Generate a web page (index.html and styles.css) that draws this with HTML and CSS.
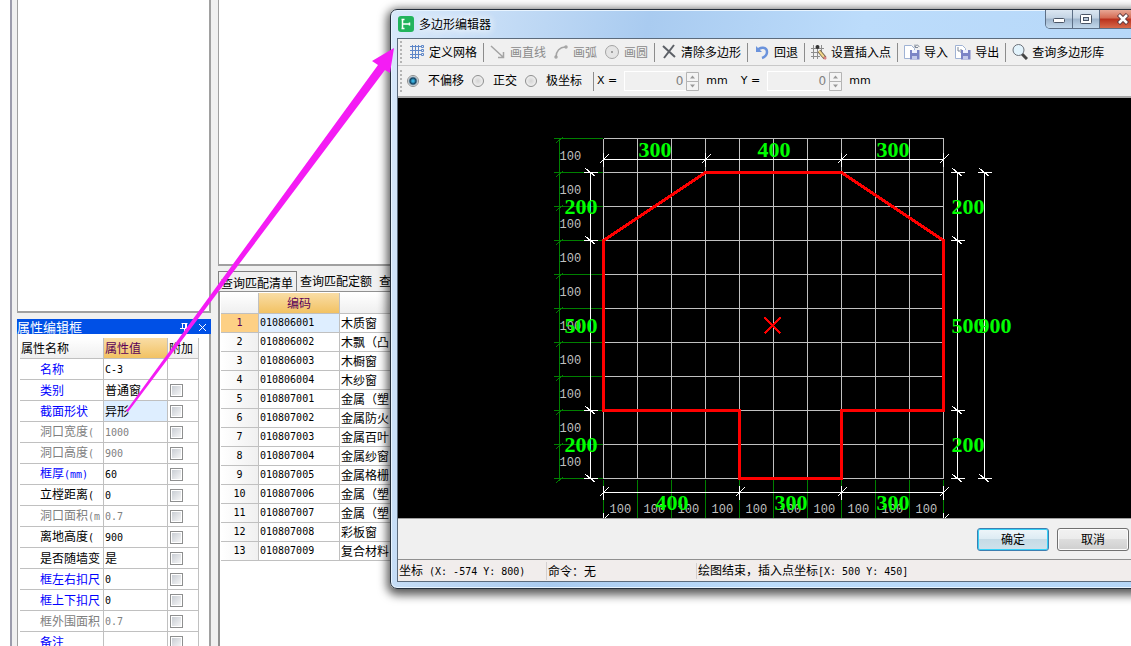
FILE: index.html
```html
<!DOCTYPE html>
<html lang="zh-CN">
<head>
<meta charset="utf-8">
<title>多边形编辑器</title>
<link rel="stylesheet" href="styles.css">
</head>
<body>
<div class="app">
  <aside class="dock">
    <div class="tree"></div>
    <div class="dock-title"><span>属性编辑框</span>
      <svg width="30" height="14" viewBox="0 0 30 14" fill="none" stroke="#fff"><path d="M2.500 3.500h6M3.500 3v5M6.500 3v5M7.500 3v5M1 8.500h8M5.500 9v3M20 4l7 7M27 4l-7 7"/></svg>
    </div>
    <div class="props">
      <table class="prop-table">
        <colgroup><col class="c-name"><col class="c-value"><col class="c-extra"></colgroup>
        <thead><tr><th>属性名称</th><th class="hot">属性值</th><th>附加</th></tr></thead>
        <tbody>
          <tr class="key"><td>名称</td><td><span class="mono">C-3</span></td><td></td></tr>
          <tr class="key"><td>类别</td><td>普通窗</td><td><input type="checkbox" aria-label="类别"></td></tr>
          <tr class="key"><td>截面形状</td><td class="sel">异形</td><td><input type="checkbox" aria-label="截面形状"></td></tr>
          <tr class="off"><td>洞口宽度<span class="mono">(</span></td><td><span class="mono">1000</span></td><td><input type="checkbox" aria-label="洞口宽度"></td></tr>
          <tr class="off"><td>洞口高度<span class="mono">(</span></td><td><span class="mono">900</span></td><td><input type="checkbox" aria-label="洞口高度"></td></tr>
          <tr class="key"><td>框厚<span class="mono">(mm)</span></td><td><span class="mono">60</span></td><td><input type="checkbox" aria-label="框厚"></td></tr>
          <tr><td>立樘距离<span class="mono">(</span></td><td><span class="mono">0</span></td><td><input type="checkbox" aria-label="立樘距离"></td></tr>
          <tr class="off"><td>洞口面积<span class="mono">(m</span></td><td><span class="mono">0.7</span></td><td><input type="checkbox" aria-label="洞口面积"></td></tr>
          <tr><td>离地高度<span class="mono">(</span></td><td><span class="mono">900</span></td><td><input type="checkbox" aria-label="离地高度"></td></tr>
          <tr><td>是否随墙变</td><td>是</td><td><input type="checkbox" aria-label="是否随墙变"></td></tr>
          <tr class="key"><td>框左右扣尺</td><td><span class="mono">0</span></td><td><input type="checkbox" aria-label="框左右扣尺"></td></tr>
          <tr class="key"><td>框上下扣尺</td><td><span class="mono">0</span></td><td><input type="checkbox" aria-label="框上下扣尺"></td></tr>
          <tr class="off"><td>框外围面积</td><td><span class="mono">0.7</span></td><td><input type="checkbox" aria-label="框外围面积"></td></tr>
          <tr class="key"><td>备注</td><td></td><td><input type="checkbox" aria-label="备注"></td></tr>
        </tbody>
      </table>
    </div>
  </aside>
  <main class="work">
    <div class="sheet"></div>
    <div class="tabs" role="tablist">
      <button class="tab active" role="tab">查询匹配清单</button>
      <button class="tab" role="tab">查询匹配定额</button>
      <button class="tab" role="tab">查</button>
    </div>
    <div class="list">
      <table class="code-table">
        <colgroup><col class="c-no"><col class="c-code"><col></colgroup>
        <thead><tr><th></th><th class="hot">编码</th><th></th></tr></thead>
        <tbody>
          <tr class="current"><th>1</th><td>010806001</td><td class="name">木质窗</td></tr>
          <tr><th>2</th><td>010806002</td><td class="name">木飘（凸</td></tr>
          <tr><th>3</th><td>010806003</td><td class="name">木橱窗</td></tr>
          <tr><th>4</th><td>010806004</td><td class="name">木纱窗</td></tr>
          <tr><th>5</th><td>010807001</td><td class="name">金属（塑</td></tr>
          <tr><th>6</th><td>010807002</td><td class="name">金属防火</td></tr>
          <tr><th>7</th><td>010807003</td><td class="name">金属百叶</td></tr>
          <tr><th>8</th><td>010807004</td><td class="name">金属纱窗</td></tr>
          <tr><th>9</th><td>010807005</td><td class="name">金属格栅</td></tr>
          <tr><th>10</th><td>010807006</td><td class="name">金属（塑</td></tr>
          <tr><th>11</th><td>010807007</td><td class="name">金属（塑</td></tr>
          <tr><th>12</th><td>010807008</td><td class="name">彩板窗</td></tr>
          <tr><th>13</th><td>010807009</td><td class="name">复合材料</td></tr>
        </tbody>
      </table>
    </div>
  </main>
</div>

<section class="dialog" role="dialog" aria-labelledby="dlg-title">
  <header class="titlebar">
    <svg class="logo" width="16" height="16" viewBox="0 0 16 16"><rect width="16" height="16" rx="3" fill="#22b45c"/><path d="M4.500 3v10M5 8h6M3.500 3.500h3M3.500 12.500h3M11.500 6.500v3" stroke="#fff" stroke-width="1.500" fill="none"/></svg>
    <h1 id="dlg-title">多边形编辑器</h1>
    <div class="win-buttons">
      <button aria-label="最小化"><svg width="14" height="10" viewBox="0 0 14 10"><rect x="1.500" y="4.500" width="11" height="4" rx="1" fill="#fff" stroke="#4a5566"/></svg></button>
      <button aria-label="最大化"><svg width="12" height="10" viewBox="0 0 12 10"><rect x=".5" y=".5" width="11" height="9" rx="1" fill="#fff" stroke="#4a5566"/><rect x="3.500" y="3.500" width="5" height="3" fill="#b9c8d9" stroke="#4a5566"/></svg></button>
      <button class="close" aria-label="关闭"><svg width="14" height="12" viewBox="0 0 14 12"><path d="M2.500 1.500l9 9M11.500 1.500l-9 9" stroke="#5b3a40" stroke-width="4.500"/><path d="M3 2l8 8M11 2l-8 8" stroke="#fff" stroke-width="2.500"/></svg></button>
    </div>
  </header>
  <div class="client">
    <div class="toolbar">
      <i class="grip"></i>
      <button><svg width="16" height="16" viewBox="0 0 16 16" fill="none" stroke="#5d86c8"><path d="M1 2.500h11M1 6.500h11M1 10.500h11M3.500 1v14M6.500 1v14M9.500 1v14M1 13.500h9"/><path d="M12.500 1.500h2v2h-2zM12.500 5.500h2v2h-2zM12.500 9.500h2v2h-2z"/></svg>定义网格</button>
      <i class="sep"></i>
      <button disabled><svg width="16" height="16" viewBox="0 0 16 16" fill="none" stroke="#a4a4a4" stroke-width="1.500"><path d="M1 2l12 11M13.500 8v5.500H8"/></svg>画直线</button>
      <button disabled><svg width="16" height="16" viewBox="0 0 16 16" fill="none" stroke="#a4a4a4" stroke-width="1.500"><path d="M3 13C3 7 7 3 12 3"/><circle cx="3" cy="13" r="1"/><circle cx="13" cy="3" r="1"/></svg>画弧</button>
      <button disabled><svg width="16" height="16" viewBox="0 0 16 16"><circle cx="8" cy="8" r="6.500" fill="#e4e4e4" stroke="#a4a4a4"/><circle cx="8" cy="8" r="1" fill="#888"/></svg>画圆</button>
      <i class="sep"></i>
      <button><svg width="16" height="16" viewBox="0 0 16 16" fill="none" stroke="#5c6066" stroke-width="2"><path d="M2 2l12 11M13 1L3 14"/></svg>清除多边形</button>
      <i class="sep"></i>
      <button><svg width="16" height="16" viewBox="0 0 16 16" fill="none" stroke="#6b93dc" stroke-width="2.500"><path d="M3 7c3-5 10-4 10 1 0 3-2 5-5 6"/><path d="M2 2v6l6 0z" fill="#6b93dc" stroke="none"/></svg>回退</button>
      <i class="sep"></i>
      <button><svg width="16" height="16" viewBox="0 0 16 16" fill="none"><path d="M0 4.500h13M0 8.500h9M0 12.500h9M2.500 1v14M6.500 1v14M10.500 1v7" stroke="#8d8d8d"/><circle cx="6.500" cy="3" r="2" fill="#333"/><path d="M8 7l6 7" stroke="#6b5a45" stroke-width="3.500"/><path d="M8 7l5 6" stroke="#f0d68a" stroke-width="2"/><path d="M13 13l2 2" stroke="#d98383" stroke-width="2.500"/></svg>设置插入点</button>
      <i class="sep"></i>
      <button><svg width="16" height="16" viewBox="0 0 16 16"><path d="M.5 1.500h7l3 3v10H.5z" fill="#fff" stroke="#9fb2d4"/><path d="M11 3c1-3 4-2 4 0M11 .5V3.500h3" fill="none" stroke="#7d8797"/><path d="M6 6h9.500v9.500H6z" fill="#7c84c6"/><path d="M8 6h5v3H8z" fill="#eef0ff"/><path d="M8 12h5v3.500H8z" fill="#c4c9ea"/></svg>导入</button>
      <button><svg width="16" height="16" viewBox="0 0 16 16"><path d="M.5 1.500h7l3 3v10H.5z" fill="#fff" stroke="#9fb2d4"/><path d="M3 3v4h4M5.500 5l2 2-2 2" fill="none" stroke="#7d8797"/><path d="M6 6h9.500v9.500H6z" fill="#7c84c6"/><path d="M8 6h5v3H8z" fill="#eef0ff"/><path d="M8 12h5v3.500H8z" fill="#c4c9ea"/></svg>导出</button>
      <i class="sep"></i>
      <button><svg width="16" height="16" viewBox="0 0 16 16"><path d="M10 10l5 5" stroke="#444" stroke-width="3"/><circle cx="6.500" cy="6" r="5.500" fill="#e2f3fc" stroke="#6b7078"/></svg>查询多边形库</button>
    </div>
    <div class="toolbar options">
      <i class="grip"></i>
      <label><input type="radio" name="offset" checked>不偏移</label>
      <label><input type="radio" name="offset">正交</label>
      <label><input type="radio" name="offset">极坐标</label>
      <i class="sep"></i>
      <div class="coord"><label for="dx">X =</label><span class="spin"><input id="dx" type="text" value="0" disabled><svg width="13" height="19" viewBox="0 0 13 19" fill="#f4f4f4" stroke="#b4b4b4"><path d="M.5.5h12v9H.5zM.5 9.500h12v9H.5z"/><path d="M4 6.500h5L6.500 3.500zM4 12.500h5L6.500 15.500z" fill="#999" stroke="none"/></svg></span><span>mm</span></div>
      <div class="coord"><label for="dy">Y =</label><span class="spin"><input id="dy" type="text" value="0" disabled><svg width="13" height="19" viewBox="0 0 13 19" fill="#f4f4f4" stroke="#b4b4b4"><path d="M.5.5h12v9H.5zM.5 9.500h12v9H.5z"/><path d="M4 6.500h5L6.500 3.500zM4 12.500h5L6.500 15.500z" fill="#999" stroke="none"/></svg></span><span>mm</span></div>
    </div>
    <svg class="canvas" role="img" aria-label="多边形">
      <defs>
        <g id="tick-h"><path d="M-7 0H7"/><path d="M-5-4L5 4"/></g>
        <g id="tick-v"><path d="M0-7V7"/><path d="M-4 4L5-5"/></g>
        <path id="tick-g" d="M-3 4L4-2"/>
      </defs>
      <g transform="translate(205.5 40.5)">
        <path class="grid" d="M0 0H340M0 34H340M0 68H340M0 102H340M0 136H340M0 170H340M0 204H340M0 238H340M0 272H340M0 306H340M0 340H340M0 0V340M34 0V340M68 0V340M102 0V340M136 0V340M170 0V340M204 0V340M238 0V340M272 0V340M306 0V340M340 0V340"/>
        <g class="axis">
          <path d="M-44 0V340M-50 0H-1M-50 34H-1M-50 68H-1M-50 102H-1M-50 136H-1M-50 170H-1M-50 204H-1M-50 238H-1M-50 272H-1M-50 306H-1M-50 340H-1"/>
          <path d="M0 341V380M34 341V380M68 341V380M102 341V380M136 341V380M170 341V380M204 341V380M238 341V380M272 341V380M306 341V380M340 341V380"/>
          <use href="#tick-g" x="-44"/><use href="#tick-g" x="-44" y="34"/><use href="#tick-g" x="-44" y="68"/><use href="#tick-g" x="-44" y="102"/><use href="#tick-g" x="-44" y="136"/><use href="#tick-g" x="-44" y="170"/><use href="#tick-g" x="-44" y="204"/><use href="#tick-g" x="-44" y="238"/><use href="#tick-g" x="-44" y="272"/><use href="#tick-g" x="-44" y="306"/><use href="#tick-g" x="-44" y="340"/>
        </g>
        <g class="unit">
          <text x="-44" y="21">100</text><text x="-44" y="55">100</text><text x="-44" y="89">100</text><text x="-44" y="123">100</text><text x="-44" y="157">100</text><text x="-44" y="191">100</text><text x="-44" y="225">100</text><text x="-44" y="259">100</text><text x="-44" y="293">100</text><text x="-44" y="327">100</text>
          <text x="6" y="374">100</text><text x="40" y="374">100</text><text x="74" y="374">100</text><text x="108" y="374">100</text><text x="142" y="374">100</text><text x="176" y="374">100</text><text x="210" y="374">100</text><text x="244" y="374">100</text><text x="278" y="374">100</text><text x="312" y="374">100</text>
        </g>
        <g class="dim">
          <path d="M0 21H340M0 354H340M-13 34V340M354 34V340M381 34V340"/>
          <use href="#tick-v" y="21"/><use href="#tick-v" x="102" y="21"/><use href="#tick-v" x="238" y="21"/><use href="#tick-v" x="340" y="21"/>
          <use href="#tick-v" y="354"/><use href="#tick-v" x="136" y="354"/><use href="#tick-v" x="238" y="354"/><use href="#tick-v" x="340" y="354"/>
          <use href="#tick-v" y="381"/><use href="#tick-v" x="340" y="381"/>
          <use href="#tick-h" x="-13" y="34"/><use href="#tick-h" x="-13" y="102"/><use href="#tick-h" x="-13" y="272"/><use href="#tick-h" x="-13" y="340"/>
          <use href="#tick-h" x="354" y="34"/><use href="#tick-h" x="354" y="102"/><use href="#tick-h" x="354" y="272"/><use href="#tick-h" x="354" y="340"/>
          <use href="#tick-h" x="381" y="34"/><use href="#tick-h" x="381" y="340"/>
        </g>
        <g class="size">
          <text x="35" y="18">300</text><text x="154" y="18">400</text><text x="273" y="18">300</text>
          <text x="-39" y="75">200</text><text x="-39" y="194">500</text><text x="-39" y="313">200</text>
          <text x="348" y="75">200</text><text x="348" y="194">500</text><text x="348" y="313">200</text><text x="375" y="194">900</text>
          <text x="52" y="371">400</text><text x="171" y="371">300</text><text x="273" y="371">300</text>
        </g>
        <path class="shape" d="M102 34H238L340 102V272H238V340H136V272H0V102Z"/>
        <path class="mark" d="M161 179L177 195M177 179L161 195"/>
      </g>
    </svg>
    <div class="actions"><button class="primary">确定</button><button>取消</button></div>
    <footer class="status">
      <span class="s-pos">坐标<span class="mono"> (X: -574 Y: 800)</span></span>
      <span class="s-cmd">命令：无</span>
      <span class="s-msg">绘图结束，插入点坐标<span class="mono">[X: 500 Y: 450]</span></span>
    </footer>
  </div>
</section>

<svg class="arrow" width="400" height="420" viewBox="0 0 400 420" aria-hidden="true"><path d="M126 411L378 65L372 61L394 48L390 73L385 70L128 412Z" fill="#f41cf4"/></svg>
</body>
</html>
```

FILE: styles.css
```css
* { box-sizing: border-box; }
html, body { height: 100%; }
body {
  margin: 0;
  overflow: hidden;
  position: relative;
  background: #fff;
  color: #000;
  font: 12px/16px "Noto Sans CJK SC", sans-serif;
}
button, input { font: inherit; color: inherit; margin: 0; }
svg { flex: none; }
.mono { font-family: "DejaVu Sans Mono", monospace; font-size: 10px; white-space: pre; }

.app { display: flex; height: 100%; background: #f0f0f0; }
.dock {
  display: flex;
  flex-direction: column;
  flex: none;
  width: 201px;
  margin-left: 10px;
  padding-left: 5px;
  border-left: 2px solid #9c9cac;
  box-shadow: -10px 0 0 #fff;
}
.tree {
  flex: none;
  height: 313px;
  background: #fff;
  border: 1px solid #a0a0a0;
  border-width: 0 2px 2px 1px;
}
.dock-title {
  display: flex;
  flex: none;
  align-items: center;
  justify-content: space-between;
  height: 15px;
  margin-top: 6px;
  padding-right: 2px;
  background: #0050e6;
  color: #fff;
  font-size: 13px;
}
.props {
  flex: 1;
  min-height: 0;
  overflow: hidden;
  padding: 4px 0 0 2px;
  background: #fff;
  border: 1px solid #a0a0a0;
  border-width: 0 2px 0 1px;
}
table { border-collapse: separate; border-spacing: 0; table-layout: fixed; }
th, td {
  padding: 0 1px;
  border-right: 1px solid #c0c0c0;
  border-bottom: 1px solid #c0c0c0;
  text-align: left;
  font-weight: normal;
  white-space: nowrap;
  overflow: hidden;
}
thead th { background: linear-gradient(#fff, #efefef); }
th.hot { background: linear-gradient(#f9dda6, #f2c263); color: #5a0058; }
.prop-table { width: 179px; }
.prop-table tr { height: 21px; }
.prop-table td:first-child { padding: 0 0 0 20px; }
.prop-table td:last-child { padding-left: 2px; }
.c-name { width: 84px; }
.c-value { width: 64px; }
.c-extra { width: 31px; }
.key td:first-child { color: #00f; }
.off { color: #808080; }
.sel { background: #deeeff; }
input[type="checkbox"] {
  appearance: none;
  display: block;
  width: 13px;
  height: 13px;
  border: 1px solid #8e8f8f;
  outline: 1px solid #fff;
  outline-offset: -2px;
  background: linear-gradient(135deg, #c4c9d0, #fafafa);
}

.work {
  display: flex;
  flex-direction: column;
  flex: 1;
  min-width: 0;
  margin-left: 7px;
}
.sheet {
  flex: none;
  height: 266px;
  background: #fff;
  border: solid #a0a0a0;
  border-width: 0 0 2px 1px;
}
.tabs { display: flex; flex: none; height: 25px; padding-top: 5px; }
.tab {
  height: 19px;
  padding: 0 4px 0 3px;
  border: 0;
  background: none;
  line-height: 16px;
}
.tab.active {
  height: 20px;
  padding: 2px 3px 0 2px;
  border: 1px solid #808080;
  border-bottom: 0;
}
.list {
  flex: 1;
  min-height: 0;
  padding: 1px 0 0 1px;
  border: solid #909090;
  border-width: 1px 0 0 2px;
  background: #fff;
}
.code-table { width: 100%; }
.code-table tr { height: 19px; }
.code-table thead tr { height: 21px; }
.code-table thead th { text-align: center; }
.code-table tbody th, .code-table td { font-family: "DejaVu Sans Mono", monospace; font-size: 10px; }
.code-table td.name { font-family: "Noto Sans CJK SC", sans-serif; font-size: 12px; }
.code-table tbody th { text-align: center; background: linear-gradient(90deg, #fff, #f0f0f0); }
.code-table .current th { background: #fdd085; color: #5a0058; }
.current td:nth-child(2) { background: #deeeff; }
.c-no { width: 38px; }
.c-code { width: 81px; }

.dialog {
  position: absolute;
  left: 390px;
  right: -24px;
  top: 9px;
  padding: 0 7px 6px 6px;
  border: 1px solid #26303c;
  border-radius: 7px;
  background: linear-gradient(100deg, #d9e9fa, #a9cbf0 30%, #bcdcfb 55%, #b4d6f8);
  box-shadow: 0 3px 10px 3px rgba(0, 0, 0, .65), inset 0 0 0 1px #e8f4ff;
}
.titlebar { display: flex; align-items: center; height: 28px; gap: 5px; padding-left: 1px; }
.titlebar h1 {
  flex: 1;
  margin: 0;
  font-size: 12px;
  font-weight: normal;
  text-shadow: 0 0 8px #fff, 0 0 8px #fff;
}
.win-buttons {
  display: flex;
  align-self: flex-start;
  border: 1px solid #5d6f86;
  border-top: 0;
  border-radius: 0 0 5px 5px;
  overflow: hidden;
}
.win-buttons button {
  display: flex;
  align-items: center;
  justify-content: center;
  width: 27px;
  height: 18px;
  padding: 0;
  border: 0;
  border-right: 1px solid #5d6f86;
  background: linear-gradient(#dce7f2, #c2d2e3 45%, #9fb5cc 50%, #c2d8ec);
}
.win-buttons .close { width: 46px; border: 0; background: linear-gradient(#e8a795, #d46a52 45%, #b9301c 50%, #d8694a); }
.client { border: 1px solid #5c6b7c; background: #f0f0f0; }
.toolbar {
  display: flex;
  align-items: center;
  gap: 6px;
  height: 27px;
  padding-left: 2px;
  border-bottom: 1px solid #c8c8c8;
  white-space: nowrap;
}
.toolbar button {
  display: flex;
  align-items: center;
  gap: 4px;
  padding: 0;
  border: 0;
  background: none;
}
.toolbar button:disabled { color: #8a8a8a; }
.toolbar button + button { margin-left: 1px; }
.grip {
  width: 2px;
  height: 22px;
  margin-right: 1px;
  background: repeating-linear-gradient(#b4b4b4 0 2px, #f0f0f0 2px 4px);
}
.sep { width: 1px; height: 19px; background: #8c8c8c; }
.options {
  gap: 4px;
  height: 32px;
  border-bottom: 2px solid #a8a8a8;
  font-family: "DejaVu Sans", "Noto Sans CJK SC", sans-serif;
}
.options label { display: flex; align-items: center; gap: 9px; }
.options > label { margin-right: 4px; }
input[type="radio"] {
  appearance: none;
  width: 12px;
  height: 12px;
  border: 1px solid #8e8f8f;
  border-radius: 50%;
  background: radial-gradient(circle, #d4d4d4, #fafafa);
}
input[type="radio"]:checked { background: radial-gradient(circle, #39b2e0 0 1px, #12405f 3px, #eef3f6 5px); }
.options .sep { margin-left: 3px; margin-right: -1px; }
.coord { display: flex; align-items: center; gap: 7px; font-size: 11px; margin-right: 9px; }
.spin { display: flex; align-items: center; }
.spin input {
  width: 62px;
  height: 20px;
  padding: 0 3px;
  border: 1px solid #fff;
  border-right: 0;
  background: #f0f0f0;
  color: #808080;
  font-size: 12px;
  text-align: right;
}
.canvas { display: block; width: 100%; height: 420px; background: #000; }
.canvas path { fill: none; shape-rendering: crispEdges; }
.grid { stroke: #c0c0c0; }
.axis { stroke: #008000; }
.dim { stroke: #fff; }
.shape { stroke: #f00; stroke-width: 3px; }
.mark { stroke: #f00; stroke-width: 2px; }
.unit { fill: #c0c0c0; font: 12px "Liberation Mono", monospace; }
.size { fill: #0f0; font: bold 22px "Liberation Serif", serif; }
.actions {
  display: flex;
  justify-content: flex-end;
  align-items: center;
  gap: 8px;
  height: 41px;
  padding-right: 17px;
  border-top: 1px solid #a0a0a0;
}
.actions button {
  width: 72px;
  height: 23px;
  padding: 0;
  border: 1px solid #707070;
  border-radius: 3px;
  background: linear-gradient(#f2f2f2, #ebebeb 50%, #dddddd 50%, #cfcfcf);
  box-shadow: inset 0 0 0 1px #fcfcfc;
}
.actions .primary {
  border-color: #3c7fb1;
  background: linear-gradient(#eef6fa, #dcebf3 50%, #c6dbe6 50%, #cfe2ec);
  box-shadow: inset 0 0 0 1px #35d1f7;
}
.status {
  display: flex;
  align-items: center;
  height: 22px;
  border-top: 1px solid #909090;
  background: #f1edec;
}
.status > span { padding-left: 1px; white-space: nowrap; }
.s-pos { width: 149px; border-right: 1px solid #d4d0d0; }
.s-cmd { width: 150px; border-right: 1px solid #d4d0d0; }
.arrow { position: absolute; left: 0; top: 0; pointer-events: none; }
```
